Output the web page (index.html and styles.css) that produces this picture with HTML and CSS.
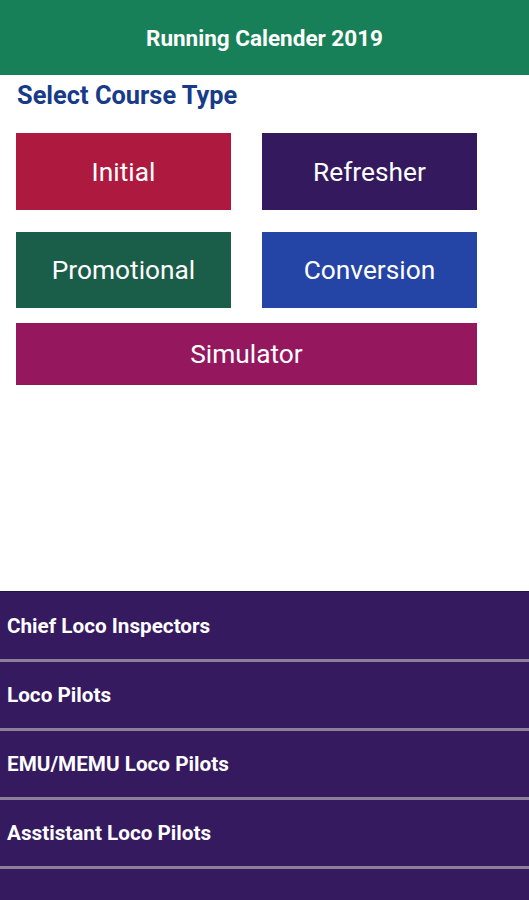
FILE: index.html
```html
<!DOCTYPE html>
<html>
<head>
<meta charset="utf-8">
<link rel="stylesheet" href="styles.css">
</head>
<body>
<header class="appbar">Running Calender 2019</header>
<main class="content">
  <h2 class="section-title">Select Course Type</h2>
  <div class="grid">
    <div class="btn btn-initial">Initial</div>
    <div class="btn btn-refresher">Refresher</div>
    <div class="btn btn-promo">Promotional</div>
    <div class="btn btn-conversion">Conversion</div>
  </div>
  <div class="btn btn-sim">Simulator</div>
</main>
<ul class="list">
  <li class="row">Chief Loco Inspectors</li>
  <li class="row">Loco Pilots</li>
  <li class="row">EMU/MEMU Loco Pilots</li>
  <li class="row">Asstistant Loco Pilots</li>
  <li class="row"></li>
</ul>
</body>
</html>
```
FILE: styles.css
```css
html, body {
  margin: 0;
  padding: 0;
  background: #ffffff;
  font-family: Roboto, "Liberation Sans", sans-serif;
}
body {
  height: 900px;
  overflow: hidden;
}
.appbar {
  height: 75px;
  background: #178058;
  color: #ffffff;
  font-weight: 700;
  font-size: 22.5px;
  display: flex;
  align-items: center;
  justify-content: center;
}
.content {
  height: 516px;
  padding-left: 16px;
  box-sizing: border-box;
}
.section-title {
  margin: 0;
  padding-top: 6px;
  padding-left: 1px;
  font-size: 25.4px;
  font-weight: 700;
  color: #173b88;
  line-height: 28px;
}
.grid {
  margin-top: 24px;
  display: grid;
  grid-template-columns: 215px 215px;
  column-gap: 31px;
  row-gap: 22px;
}
.btn {
  height: 77px;
  display: flex;
  align-items: center;
  justify-content: center;
  color: #ffffff;
  font-size: 26.3px;
}
.btn-initial { background: #ae1a3f; }
.btn-refresher { background: #35195f; }
.btn-promo { background: #1a5d48; height: 76px; }
.btn-conversion { background: #2444a6; height: 76px; }
.btn-sim {
  margin-top: 15px;
  width: 461px;
  height: 62px;
  background: #95185e;
}
.list {
  list-style: none;
  margin: 0;
  padding: 0;
  background: #351a60;
}
.row {
  height: 66px;
  border-bottom: 3px solid #8b809c;
  display: flex;
  align-items: center;
  padding-left: 7px;
  color: #ffffff;
  font-weight: 700;
  font-size: 20.7px;
}
.row:first-child {
  border-top: 1px solid #241048;
  height: 67px;
}
```
